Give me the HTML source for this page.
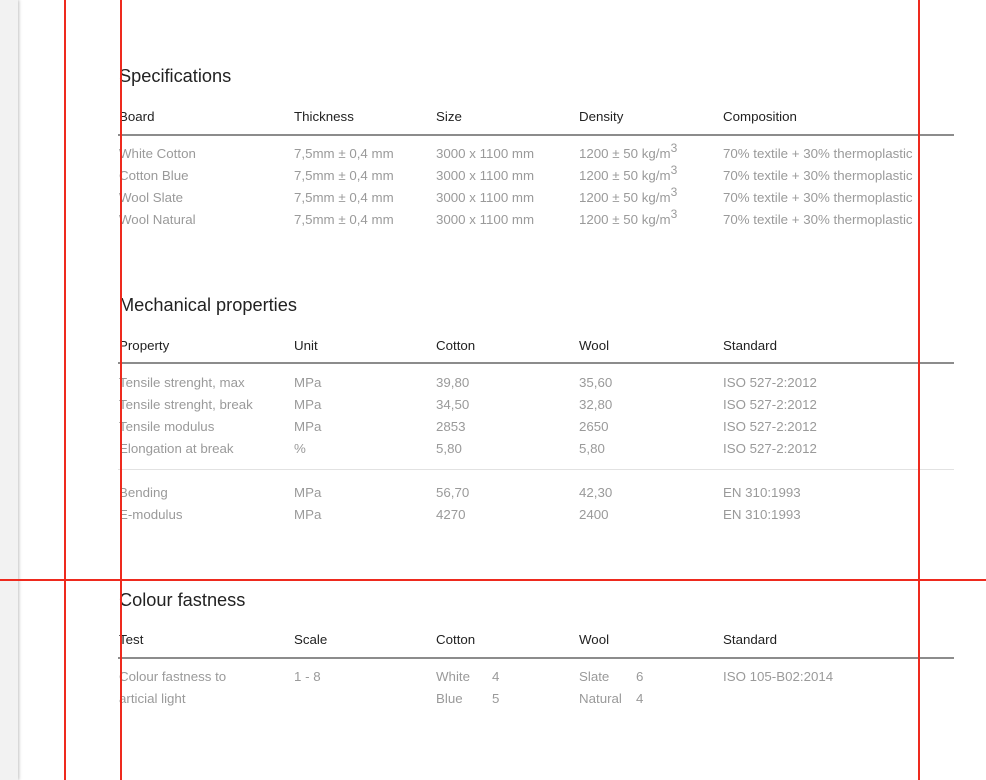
<!DOCTYPE html>
<html><head><style>
body{margin:0;width:986px;height:780px;background:#fff;position:relative;overflow:hidden;font-family:"Liberation Sans",Arial,sans-serif}
.strip{position:absolute;left:0;top:0;width:18px;height:780px;background:#f2f2f2;box-shadow:1px 0 3px rgba(0,0,0,.25)}
.t{position:absolute;white-space:nowrap;font-size:13.3px;line-height:16px;margin-top:1px}
.h1{position:absolute;left:119px;font-size:18.2px;color:#222;line-height:20px;margin-top:1px}
.hd{color:#222}
.d{color:#9a9a9a}
.rule{position:absolute;left:118px;width:836px;height:2px;background:#8c8c8c}
.lrule{position:absolute;left:118px;width:836px;height:1px;background:#e2e2e2}
.rv{position:absolute;top:0;width:2px;height:780px;background:#ee2a1e}
.rh{position:absolute;left:0;top:579px;width:986px;height:2px;background:#ee2a1e}
sup{font-size:12px;line-height:0;vertical-align:6px}
</style></head><body>
<div class="strip"></div>

<div class="h1" style="top:65px">Specifications</div>
<div class="t hd" style="left:119px;top:108px">Board</div>
<div class="t hd" style="left:294px;top:108px">Thickness</div>
<div class="t hd" style="left:436px;top:108px">Size</div>
<div class="t hd" style="left:579px;top:108px">Density</div>
<div class="t hd" style="left:723px;top:108px">Composition</div>
<div class="rule" style="top:134px"></div>

<div class="t d" style="left:119px;top:145px">White Cotton</div>
<div class="t d" style="left:119px;top:167px">Cotton Blue</div>
<div class="t d" style="left:119px;top:189px">Wool Slate</div>
<div class="t d" style="left:119px;top:211px">Wool Natural</div>
<div class="t d" style="left:294px;top:145px">7,5mm ± 0,4 mm</div>
<div class="t d" style="left:294px;top:167px">7,5mm ± 0,4 mm</div>
<div class="t d" style="left:294px;top:189px">7,5mm ± 0,4 mm</div>
<div class="t d" style="left:294px;top:211px">7,5mm ± 0,4 mm</div>
<div class="t d" style="left:436px;top:145px">3000 x 1100 mm</div>
<div class="t d" style="left:436px;top:167px">3000 x 1100 mm</div>
<div class="t d" style="left:436px;top:189px">3000 x 1100 mm</div>
<div class="t d" style="left:436px;top:211px">3000 x 1100 mm</div>
<div class="t d" style="left:579px;top:145px">1200 ± 50 kg/m<sup>3</sup></div>
<div class="t d" style="left:579px;top:167px">1200 ± 50 kg/m<sup>3</sup></div>
<div class="t d" style="left:579px;top:189px">1200 ± 50 kg/m<sup>3</sup></div>
<div class="t d" style="left:579px;top:211px">1200 ± 50 kg/m<sup>3</sup></div>
<div class="t d" style="left:723px;top:145px">70% textile + 30% thermoplastic</div>
<div class="t d" style="left:723px;top:167px">70% textile + 30% thermoplastic</div>
<div class="t d" style="left:723px;top:189px">70% textile + 30% thermoplastic</div>
<div class="t d" style="left:723px;top:211px">70% textile + 30% thermoplastic</div>

<div class="h1" style="top:294px">Mechanical properties</div>
<div class="t hd" style="left:119px;top:337px">Property</div>
<div class="t hd" style="left:294px;top:337px">Unit</div>
<div class="t hd" style="left:436px;top:337px">Cotton</div>
<div class="t hd" style="left:579px;top:337px">Wool</div>
<div class="t hd" style="left:723px;top:337px">Standard</div>
<div class="rule" style="top:362px"></div>

<div class="t d" style="left:119px;top:374px">Tensile strenght, max</div>
<div class="t d" style="left:119px;top:396px">Tensile strenght, break</div>
<div class="t d" style="left:119px;top:418px">Tensile modulus</div>
<div class="t d" style="left:119px;top:440px">Elongation at break</div>
<div class="t d" style="left:294px;top:374px">MPa</div>
<div class="t d" style="left:294px;top:396px">MPa</div>
<div class="t d" style="left:294px;top:418px">MPa</div>
<div class="t d" style="left:294px;top:440px">%</div>
<div class="t d" style="left:436px;top:374px">39,80</div>
<div class="t d" style="left:436px;top:396px">34,50</div>
<div class="t d" style="left:436px;top:418px">2853</div>
<div class="t d" style="left:436px;top:440px">5,80</div>
<div class="t d" style="left:579px;top:374px">35,60</div>
<div class="t d" style="left:579px;top:396px">32,80</div>
<div class="t d" style="left:579px;top:418px">2650</div>
<div class="t d" style="left:579px;top:440px">5,80</div>
<div class="t d" style="left:723px;top:374px">ISO 527-2:2012</div>
<div class="t d" style="left:723px;top:396px">ISO 527-2:2012</div>
<div class="t d" style="left:723px;top:418px">ISO 527-2:2012</div>
<div class="t d" style="left:723px;top:440px">ISO 527-2:2012</div>
<div class="lrule" style="top:469px"></div>
<div class="t d" style="left:119px;top:484px">Bending</div>
<div class="t d" style="left:119px;top:506px">E-modulus</div>
<div class="t d" style="left:294px;top:484px">MPa</div>
<div class="t d" style="left:294px;top:506px">MPa</div>
<div class="t d" style="left:436px;top:484px">56,70</div>
<div class="t d" style="left:436px;top:506px">4270</div>
<div class="t d" style="left:579px;top:484px">42,30</div>
<div class="t d" style="left:579px;top:506px">2400</div>
<div class="t d" style="left:723px;top:484px">EN 310:1993</div>
<div class="t d" style="left:723px;top:506px">EN 310:1993</div>

<div class="h1" style="top:589px">Colour fastness</div>
<div class="t hd" style="left:119px;top:631px">Test</div>
<div class="t hd" style="left:294px;top:631px">Scale</div>
<div class="t hd" style="left:436px;top:631px">Cotton</div>
<div class="t hd" style="left:579px;top:631px">Wool</div>
<div class="t hd" style="left:723px;top:631px">Standard</div>
<div class="rule" style="top:657px"></div>
<div class="t d" style="left:119px;top:668px">Colour fastness to</div>
<div class="t d" style="left:119px;top:690px">articial light</div>
<div class="t d" style="left:294px;top:668px">1 - 8</div>
<div class="t d" style="left:436px;top:668px">White</div>
<div class="t d" style="left:492px;top:668px">4</div>
<div class="t d" style="left:436px;top:690px">Blue</div>
<div class="t d" style="left:492px;top:690px">5</div>
<div class="t d" style="left:579px;top:668px">Slate</div>
<div class="t d" style="left:636px;top:668px">6</div>
<div class="t d" style="left:579px;top:690px">Natural</div>
<div class="t d" style="left:636px;top:690px">4</div>
<div class="t d" style="left:723px;top:668px">ISO 105-B02:2014</div>

<div class="rv" style="left:64px"></div>
<div class="rv" style="left:120px"></div>
<div class="rv" style="left:918px"></div>
<div class="rh"></div>
</body></html>
